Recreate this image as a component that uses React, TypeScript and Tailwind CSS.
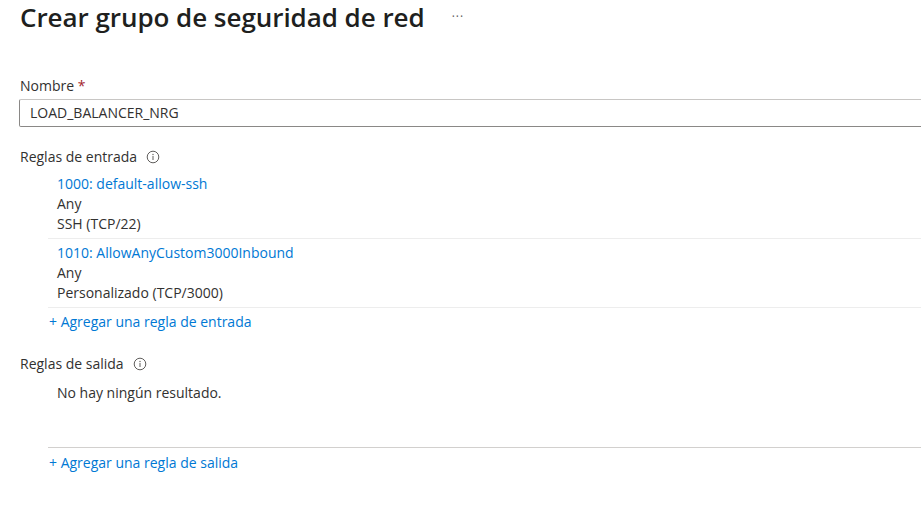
import * as React from "react";

type Rule = { name: string; source: string; service: string };

const inbound: Rule[] = [
  { name: "1000: default-allow-ssh", source: "Any", service: "SSH (TCP/22)" },
  {
    name: "1010: AllowAnyCustom3000Inbound",
    source: "Any",
    service: "Personalizado (TCP/3000)",
  },
];

function InfoIcon() {
  return (
    <svg width="14" height="14" viewBox="0 0 14 14" className="text-[#605e5c]">
      <circle cx="7" cy="7" r="5.8" fill="none" stroke="currentColor" strokeWidth="1" />
      <circle cx="7" cy="4.5" r="0.7" fill="currentColor" />
      <rect x="6.5" y="6" width="1" height="4" fill="currentColor" />
    </svg>
  );
}

function SectionLabel({ children }: { children: React.ReactNode }) {
  return (
    <div className="flex items-center gap-[9px] pl-5 h-5 text-[#323130]">
      <span>{children}</span>
      <InfoIcon />
    </div>
  );
}

export default function App() {
  return (
    <div
      className="w-[921px] h-[531px] overflow-hidden bg-white text-[14px] leading-[20px] text-[#323130]"
      style={{ fontFamily: '"Open Sans", "Noto Sans", sans-serif' }}
    >
      {/* header */}
      <div className="flex items-center pl-5 h-[34px]">
        <h1 className="text-[26px] leading-[34px] font-semibold text-[#201f1e] tracking-[-0.05px]">
          Crear grupo de seguridad de red
        </h1>
        <span className="ml-[27px] text-[12px] text-[#605e5c] tracking-[1px]">···</span>
      </div>

      {/* nombre */}
      <div className="mt-[42px] pl-5">
        <div className="h-5">
          Nombre <span className="text-[#a4262c]">*</span>
        </div>
        <div className="mt-[3px] ml-[-1px] h-[28px] border border-[#8a8886] border-t-[#c8c6c4] rounded-[2px] pl-[10px] flex items-center w-[1000px]">
          LOAD_BALANCER_NRG
        </div>
      </div>

      {/* entrada */}
      <div className="mt-[20px]">
        <SectionLabel>Reglas de entrada</SectionLabel>
        <div className="ml-[48px] mt-[3px]">
          {inbound.map((r) => (
            <div key={r.name} className="pl-[9px] py-[4px] border-b border-[#ededed]">
              <div className="text-[#0078d4]">{r.name}</div>
              <div>{r.source}</div>
              <div>{r.service}</div>
            </div>
          ))}
          <div className="pl-[1px] mt-[4px] text-[#0078d4]">+ Agregar una regla de entrada</div>
        </div>
      </div>

      {/* salida */}
      <div className="mt-[22px]">
        <SectionLabel>Reglas de salida</SectionLabel>
        <div className="ml-[48px] mt-[9px]">
          <div className="pl-[9px] h-[65px] border-b border-[#d2d0ce]">No hay ningún resultado.</div>
          <div className="pl-[1px] mt-[5px] text-[#0078d4]">+ Agregar una regla de salida</div>
        </div>
      </div>
    </div>
  );
}
